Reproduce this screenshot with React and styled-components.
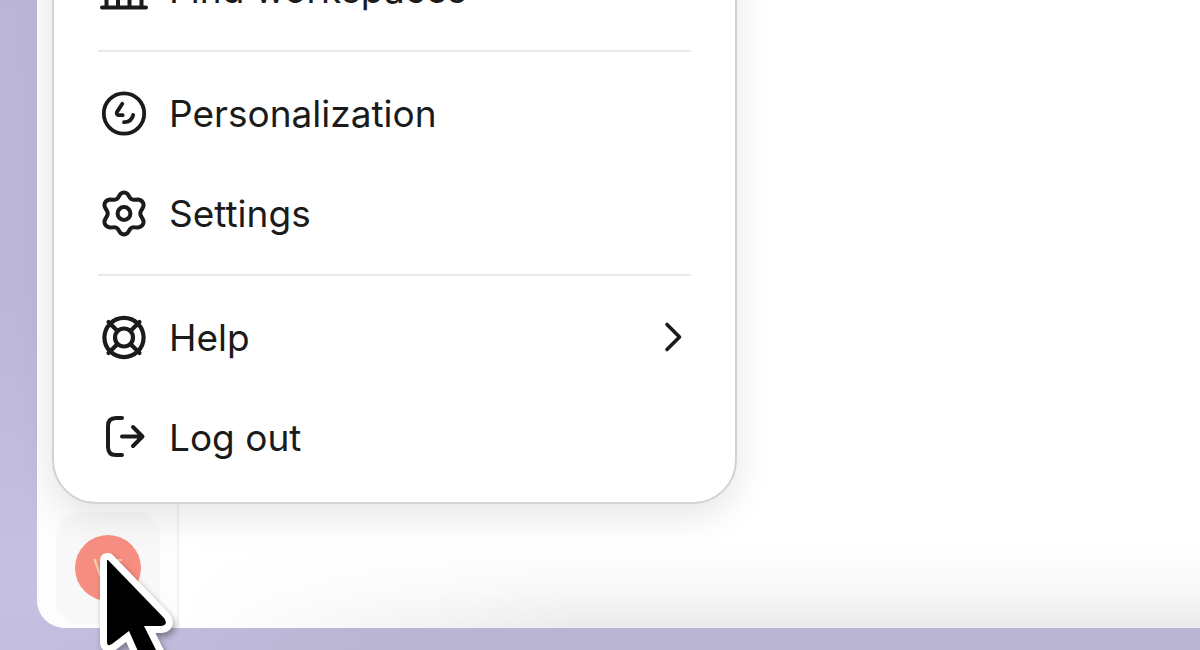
import styled, { createGlobalStyle } from "styled-components";

const GlobalStyle = createGlobalStyle`
	* {
		box-sizing: border-box;
	}
	body {
		margin: 0;
		overflow: hidden;
		font-family: Inter, "Liberation Sans", sans-serif;
		color: #1b1b1b;
	}
	button {
		font: inherit;
		color: inherit;
		border: none;
		background: none;
		cursor: pointer;
	}
`;

function BuildingIcon() {
	return (
		<Icon viewBox="0 0 48 48" strokeWidth="4">
			<path d="M6 16 24 4l18 12v3H6zM2 42.500h44M6.500 20v22M18 20v22M29.500 20v22M41.500 20v22" />
		</Icon>
	);
}

function PersonalizationIcon() {
	return (
		<Icon viewBox="0 0 48 48" strokeWidth="3.8">
			<circle cx="24" cy="24.500" r="20.2" />
			<path d="M22.3 14.8 17.2 22.6c-1.2 2 0 3.6 2.1 3.6h3.4M33.2 26c-1.2 4.6-4.6 7.3-9.2 7.2" />
		</Icon>
	);
}

function SettingsIcon() {
	return (
		<Icon viewBox="0 0 48 48" strokeWidth="4">
			<circle cx="24" cy="24.500" r="6.4" />
			<path
				transform="translate(0 .5)"
				d="M20.2 4.8Q24 1.2 27.8 4.8L30 8.4Q31.4 10.4 34 10.2L38.2 10Q43 10.8 43.6 15.2Q43.6 17 42.6 18.6L41 21.4Q39.6 24 41 26.6L42.6 29.4Q43.6 31 43.6 32.8Q43 37.2 38.2 38L34 37.8Q31.4 37.6 30 39.6L27.8 43.2Q24 46.8 20.2 43.2L18 39.6Q16.6 37.6 14 37.8L9.8 38Q5 37.2 4.4 32.8Q4.4 31 5.4 29.4L7 26.6Q8.4 24 7 21.4L5.4 18.6Q4.4 17 4.4 15.2Q5 10.8 9.8 10L14 10.2Q16.6 10.4 18 8.4Z"
			/>
		</Icon>
	);
}

function HelpIcon() {
	return (
		<Icon viewBox="0 0 48 48" strokeWidth="4.2">
			<circle cx="24" cy="24.500" r="19.6" />
			<circle cx="24" cy="24.500" r="9" />
			<path d="M8.500 9l9 9M39.500 9l-9 9M8.500 40l9-9M39.500 40l-9-9" />
		</Icon>
	);
}

function LogoutIcon() {
	return (
		<Icon viewBox="0 0 48 48" strokeWidth="4">
			<path d="M22 5h-6Q8 5 8 13v21q0 8 8 8h6M22 23.500h20M33 14l9.500 9.500L33 33" />
		</Icon>
	);
}

function ChevronIcon() {
	return (
		<Chevron viewBox="0 0 20 32" strokeWidth="3.6" aria-hidden="true">
			<path d="M4 3.500l12.500 12.500L4 28.500" />
		</Chevron>
	);
}

function MenuItem({ icon, label, submenu }) {
	return (
		<Item type="button" role="menuitem" aria-haspopup={submenu ? "menu" : undefined}>
			{icon}
			<ItemLabel>{label}</ItemLabel>
			{submenu && <ChevronIcon />}
		</Item>
	);
}

function AccountMenu() {
	return (
		<Menu role="menu" aria-label="Account">
			<MenuItem icon={<BuildingIcon />} label="Find workspaces" />
			<Divider />
			<MenuItem icon={<PersonalizationIcon />} label="Personalization" />
			<MenuItem icon={<SettingsIcon />} label="Settings" />
			<Divider />
			<MenuItem icon={<HelpIcon />} label="Help" submenu />
			<MenuItem icon={<LogoutIcon />} label="Log out" />
		</Menu>
	);
}

export default function App() {
	return (
		<Desktop>
			<GlobalStyle />
			<Window>
				<Rail>
					<ProfileButton type="button">
						<Avatar>VF</Avatar>
					</ProfileButton>
				</Rail>
				<Content />
				<AccountMenu />
			</Window>
			<Cursor viewBox="0 0 90 130" aria-hidden="true">
				<path
					d="M12 14v82q0 5 5 2l17-13 20 45h20L49 80h17q8-1 3-8L13 14Z"
					fill="#000"
					stroke="#fff"
					strokeWidth="14"
					strokeLinejoin="round"
					paintOrder="stroke"
				/>
			</Cursor>
		</Desktop>
	);
}

const Desktop = styled.div`
	display: flex;
	height: 100vh;
	padding: 0 0 22px 37px;
	overflow: hidden;
	position: relative;
	background:
		linear-gradient(to right, rgba(187, 181, 212, 0) 37px, #bbb5d4 400px),
		linear-gradient(to bottom, #bbb6d5 0%, #bdb8d8 50%, #c6c0e3 90%, #c3bddf 100%);
`;

const Window = styled.main`
	display: flex;
	flex: 1;
	position: relative;
	background: #ffffff;
	border-bottom-left-radius: 28px;
`;

const Rail = styled.aside`
	display: flex;
	flex-direction: column;
	justify-content: flex-end;
	width: 142px;
	padding: 0 17px 4px 19px;
	background: #fdfdfd;
	border-right: 2px solid #f1f1f1;
	border-bottom-left-radius: 28px;
`;

const ProfileButton = styled.button`
	display: flex;
	align-items: center;
	justify-content: center;
	height: 112px;
	padding: 0;
	background: #f8f8f8;
	border-radius: 24px;
`;

const Avatar = styled.span`
	display: flex;
	align-items: center;
	justify-content: center;
	width: 66px;
	height: 66px;
	border-radius: 50%;
	background: #f68f82;
	color: #f9cfb0;
	font-size: 24px;
`;

const Content = styled.section`
	flex: 1;
	background:
		linear-gradient(to right, #ffffff 0, rgba(255, 255, 255, 0) 400px),
		linear-gradient(to top, #ebebeb 0, #f7f7f7 36px, #ffffff 84px);
`;

const Menu = styled.div`
	position: absolute;
	left: 15px;
	bottom: 124px;
	width: 685px;
	max-width: calc(100% - 30px);
	padding: 14px 44px 15px;
	background: #ffffff;
	border: 2px solid #d2d2d2;
	border-radius: 44px;
	box-shadow: 0 12px 36px rgba(0, 0, 0, 0.1);
`;

const Item = styled.button`
	display: flex;
	align-items: center;
	gap: 21px;
	width: 100%;
	height: 100px;
	padding: 0 8px 0 2px;
	text-align: left;
`;

const ItemLabel = styled.span`
	flex: 1;
	padding-top: 2px;
	font-size: 37px;
	line-height: 48px;
`;

const Divider = styled.hr`
	height: 2px;
	margin: 11px 0;
	border: none;
	background: #e8e8e8;
`;

const Icon = styled.svg`
	width: 48px;
	height: 48px;
	flex: none;
	fill: none;
	stroke: currentColor;
	stroke-linecap: round;
	stroke-linejoin: round;
`;

const Chevron = styled(Icon)`
	width: 20px;
	height: 32px;
`;

const Cursor = styled.svg`
	position: absolute;
	left: 95px;
	top: 546px;
	width: 90px;
	height: 130px;
	overflow: visible;
	filter: drop-shadow(2px 4px 3px rgba(0, 0, 0, 0.35));
`;
